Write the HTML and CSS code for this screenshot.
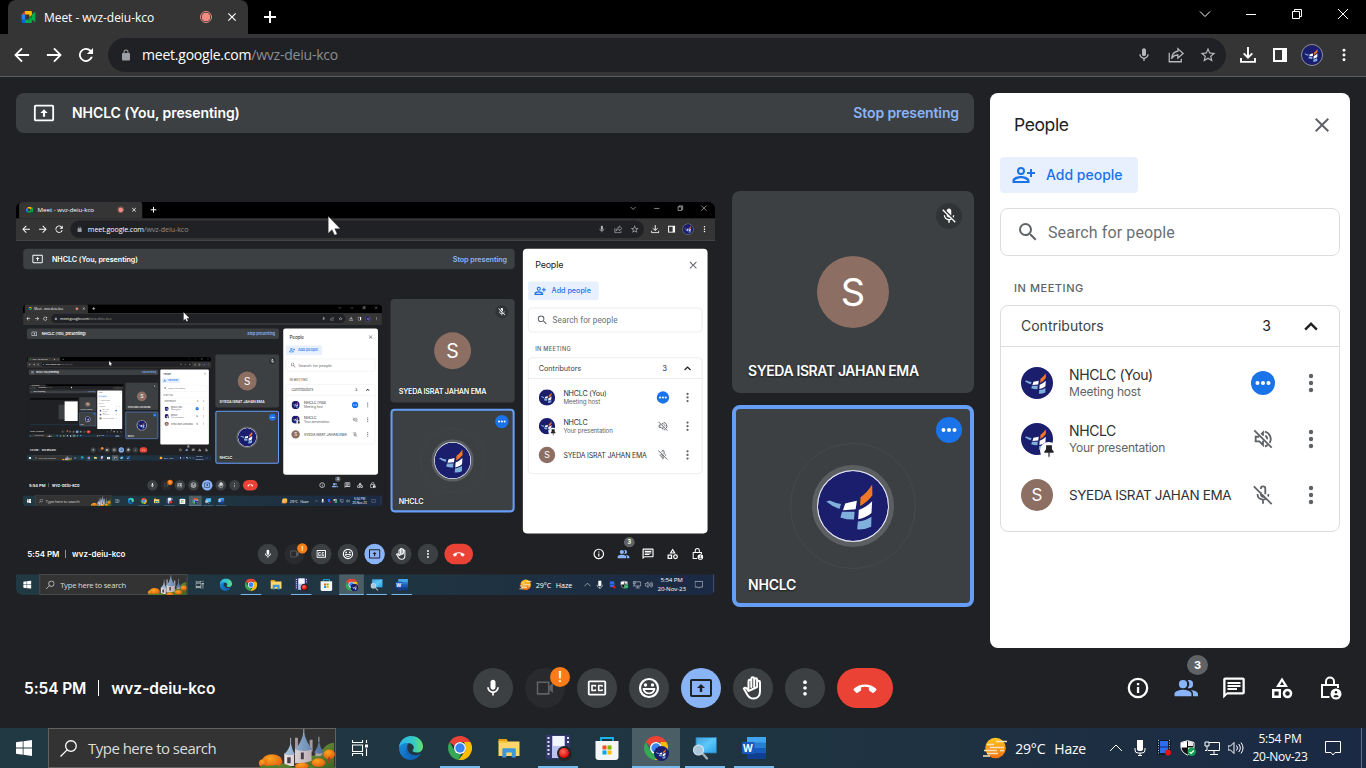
FILE: index.html
```html
<!DOCTYPE html>
<html lang="en">
<head>
<meta charset="utf-8">
<title>Meet - wvz-deiu-kco</title>
<link rel="stylesheet" href="styles.css">
</head>
<body>
<svg class="sprite" width="0" height="0" aria-hidden="true">
  <defs>
    <linearGradient id="sun" x1="0" y1="0" x2="0" y2="1"><stop offset="0" stop-color="#ffc91f"/><stop offset="1" stop-color="#f2700f"/></linearGradient>
    <linearGradient id="edge-a" x1="0" y1="0" x2="1" y2="0"><stop offset="0" stop-color="#2bb3ee"/><stop offset=".6" stop-color="#35c9c6"/><stop offset="1" stop-color="#67e06a"/></linearGradient>
    <linearGradient id="edge-b" x1="0" y1="0" x2="1" y2="1"><stop offset="0" stop-color="#1a93e0"/><stop offset="1" stop-color="#0c56a8"/></linearGradient>
    <linearGradient id="hill" x1="0" y1="0" x2="1" y2="1"><stop offset="0" stop-color="#7c9a3e"/><stop offset="1" stop-color="#3a6526"/></linearGradient>
    <linearGradient id="roof" x1="0" y1="0" x2="1" y2="0"><stop offset="0" stop-color="#a9c4e0"/><stop offset="1" stop-color="#4c6f9a"/></linearGradient>
    <linearGradient id="wall" x1="0" y1="0" x2="1" y2="0"><stop offset="0" stop-color="#efe6e6"/><stop offset="1" stop-color="#a79aa2"/></linearGradient>
    <radialGradient id="tree" cx=".4" cy=".3" r=".8"><stop offset="0" stop-color="#ffa51f"/><stop offset="1" stop-color="#d9540c"/></radialGradient>
    <linearGradient id="screen" x1="0" y1="0" x2="1" y2="1"><stop offset="0" stop-color="#3f9ed8"/><stop offset=".5" stop-color="#5cc8fa"/><stop offset="1" stop-color="#2a9fe6"/></linearGradient>
    <radialGradient id="rec" cx=".4" cy=".35" r=".7"><stop offset="0" stop-color="#ff6a5a"/><stop offset="1" stop-color="#d90000"/></radialGradient>
  </defs>
  <symbol id="i-logo" viewBox="0 0 72 72"><circle cx="36" cy="36" r="36" fill="#1b1d6d"/><path fill="#f07724" d="M55.7 14 56 25Q51 32 43.3 36L43.7 27Q51 22 55.7 14z"/><path fill="#fff" d="M28 33.3Q34 32 40 30.7L38.7 39.3 25.7 40.3zM42 40Q50 37 55.7 31L55 43.3Q50 48 41.3 49.7z"/><path fill="#7fb0db" d="M8.5 31.3 12 30.3Q18 33 23.7 34L22 39Q14 36 8.5 31.3zM24.7 42H37.7L37 50Q29 50 23 47.7zM41 52Q49 51 55 47L54.7 57.3Q48 60.5 40.3 60z"/></symbol>
  <symbol id="i-meet" viewBox="0 0 16 14"><path fill="#00832d" d="M9 7 11 9.3 13.5 11V3z"/><path fill="#0066da" d="M0 10v2.7C0 13.4.6 14 1.3 14H4l.6-2L4 10z"/><path fill="#e94235" d="M4 0 0 4l2 .6L4 4z"/><path fill="#2684fc" d="M0 4h4v6H0z"/><path fill="#00ac47" d="m15.100 1.500L12 4v6l3.100 2.500c.5.4 1 .1 1-.5V2c0-.6-.6-.9-1-.5zM9 7v3H4v4h6.700c.7 0 1.300-.6 1.300-1.300V10z"/><path fill="#ffba00" d="M10.700 0H4v4h5v3l3-2.500V1.300C12 .6 11.400 0 10.700 0z"/></symbol>
  <symbol id="i-back" viewBox="0 0 24 24"><path d="M21.500 10.700H6.300l6.600-6.600L11.200 2.400 1.600 12l9.600 9.600 1.700-1.700-6.600-6.600h15.200z"/></symbol>
  <symbol id="i-reload" viewBox="0 0 24 24"><path d="M18.700 5.300A9.400 9.400 0 1 0 21.100 14.400h-2.700A6.900 6.900 0 1 1 16.900 7.100L13.200 10.800H21.400V2.600z"/></symbol>
  <symbol id="i-lock" viewBox="0 0 24 24"><path d="M18 8h-1V6A5 5 0 0 0 7 6v2H6a2 2 0 0 0-2 2v11a2 2 0 0 0 2 2h12a2 2 0 0 0 2-2V10a2 2 0 0 0-2-2zM9 8V6a3 3 0 0 1 6 0v2z"/></symbol>
  <symbol id="i-mic" viewBox="0 0 24 24"><path d="M12 14c1.660 0 3-1.340 3-3V5c0-1.660-1.340-3-3-3S9 3.340 9 5v6c0 1.660 1.340 3 3 3zm5-3c0 2.760-2.240 5-5 5s-5-2.240-5-5H5c0 3.530 2.610 6.430 6 6.920V21h2v-3.080c3.390-.49 6-3.390 6-6.920z"/></symbol>
  <symbol id="i-micoff" viewBox="0 0 24 24"><path d="M19 11h-1.700c0 .74-.16 1.430-.43 2.050l1.230 1.230c.56-.98.9-2.090.9-3.280zm-4.020.17c0-.06.02-.11.02-.17V5c0-1.660-1.340-3-3-3S9 3.340 9 5v.18l5.980 5.990zM4.270 3 3 4.270l6.010 6.010V11c0 1.660 1.330 3 2.990 3 .22 0 .44-.03.65-.08l1.660 1.660c-.71.33-1.500.52-2.310.52-2.760 0-5.300-2.100-5.300-5.100H5c0 3.410 2.720 6.230 6 6.720V21h2v-3.280c.91-.13 1.770-.45 2.540-.9L19.730 21 21 19.730 4.270 3z"/></symbol>
  <symbol id="i-micoffline" viewBox="0 0 24 24"><g fill="none" stroke="currentColor" stroke-width="2"><path d="M2 2.500 21.500 22M9.700 9v2.500a2.500 2.500 0 0 0 3.500 2.200M9.700 5.500V5a2.400 2.400 0 0 1 4.800 0v6.200M6 11c0 3.500 2.700 6 6 6 1 0 2-.2 2.800-.6M18 11c0 1-.2 2-.6 2.700M12 17v4.500"/></g></symbol>
  <symbol id="i-voloff" viewBox="0 0 24 24"><g fill="none" stroke="currentColor" stroke-width="2"><path d="M2.500 2.500 21.500 21.500M7.800 9.500H4v5h4l4 4V14M10 7l2-2v3.500M14 4a8.200 8.200 0 0 1 5.200 12.300M17 18.500a8 8 0 0 1-3 1.600M14.500 8.300c1.500.8 2.200 2.300 1.900 4"/></g></symbol>
  <symbol id="i-share" viewBox="0 0 24 24"><path fill="none" stroke="currentColor" stroke-width="1.700" d="M3 9v12h16v-4M14.500 3.500 21.500 10l-7 6v-4C10.500 12 8 13.500 6 17 6.500 12 9 7.500 14.500 7z"/></symbol>
  <symbol id="i-star" viewBox="0 0 24 24"><path d="m22 9.240-7.190-.62L12 2 9.190 8.630 2 9.240l5.460 4.730L5.820 21 12 17.270 18.180 21l-1.630-7.030L22 9.240zM12 15.400l-3.760 2.270 1-4.280-3.320-2.880 4.380-.38L12 6.100l1.710 4.040 4.380.38-3.320 2.880 1 4.280L12 15.400z"/></symbol>
  <symbol id="i-download" viewBox="0 0 16 16"><path fill="none" stroke="currentColor" stroke-width="1.900" d="M8 0v10M3.700 6.300 8 10.600l4.300-4.300M1 11v3.900h14V11"/></symbol>
  <symbol id="i-dots" viewBox="0 0 24 24"><circle cx="12" cy="5" r="2.200"/><circle cx="12" cy="12" r="2.200"/><circle cx="12" cy="19" r="2.200"/></symbol>
  <symbol id="i-hdots" viewBox="0 0 24 24"><circle cx="6" cy="12" r="2.200"/><circle cx="12" cy="12" r="2.200"/><circle cx="18" cy="12" r="2.200"/></symbol>
  <symbol id="i-x" viewBox="0 0 24 24"><path d="M19 6.410 17.590 5 12 10.590 6.410 5 5 6.410 10.590 12 5 17.590 6.410 19 12 13.410 17.590 19 19 17.590 13.410 12z"/></symbol>
  <symbol id="i-present" viewBox="0 0 24 24"><path d="M21 3H3c-1.110 0-2 .89-2 2v14c0 1.110.89 2 2 2h18c1.110 0 2-.89 2-2V5c0-1.110-.89-2-2-2zm0 16.020H3V4.980h18v14.040zM10.800 16h2.400v-4H16l-4-4-4 4h2.800z"/></symbol>
  <symbol id="i-addperson" viewBox="0 0 24 24"><path d="M9 12a4 4 0 1 0 0-8 4 4 0 0 0 0 8zm0-6a2 2 0 1 1 0 4 2 2 0 0 1 0-4zm0 7c-2.700 0-8.500 1.300-8.500 4.500V20h17v-2.500C17.500 14.300 11.700 13 9 13zm-6.400 5c.3-1.200 3.700-2.800 6.400-2.800s6.100 1.600 6.400 2.800zM20 9V6h-2v3h-3v2h3v3h2v-3h3V9z"/></symbol>
  <symbol id="i-search" viewBox="0 0 24 24"><path d="M15.500 14h-.79l-.28-.27A6.470 6.470 0 0 0 16 9.500 6.500 6.500 0 1 0 9.500 16c1.610 0 3.090-.59 4.230-1.570l.27.28v.79l5 4.990L20.490 19l-4.990-5zm-6 0C7.010 14 5 11.990 5 9.500S7.010 5 9.500 5 14 7.010 14 9.500 11.990 14 9.500 14z"/></symbol>
  <symbol id="i-up" viewBox="0 0 24 24"><path d="m12 8-6.700 6.700 1.700 1.700 5-5 5 5 1.700-1.700z"/></symbol>
  <symbol id="i-pin" viewBox="0 0 24 24"><path d="M17 9V2H7v7l-3 4v2h7v6l1 2 1-2v-6h7v-2z"/></symbol>
  <symbol id="i-cam" viewBox="0 0 24 24"><path fill="none" stroke="currentColor" stroke-width="1.900" d="M3 5h13.500v14H3z"/><path d="m17 10 4.500-4v12L17 14z"/></symbol>
  <symbol id="i-cc" viewBox="0 0 24 24"><path d="M3 3a2 2 0 0 0-2 2v14a2 2 0 0 0 2 2h18a2 2 0 0 0 2-2V5a2 2 0 0 0-2-2zm.2 2.200h17.600v13.600H3.200zM6 8a1 1 0 0 0-1 1v6a1 1 0 0 0 1 1h4a1 1 0 0 0 1-1v-1.500H9v.5H7v-4h2v.5h2V9a1 1 0 0 0-1-1zm8 0a1 1 0 0 0-1 1v6a1 1 0 0 0 1 1h4a1 1 0 0 0 1-1v-1.500h-2v.5h-2v-4h2v.5h2V9a1 1 0 0 0-1-1z"/></symbol>
  <symbol id="i-smile" viewBox="0 0 24 24"><circle cx="12" cy="12" r="9" fill="none" stroke="currentColor" stroke-width="2.200"/><circle cx="8.500" cy="9" r="1.700"/><circle cx="15.500" cy="9" r="1.700"/><path fill="none" stroke="currentColor" stroke-width="1.800" stroke-linejoin="round" d="M6.500 13h11c-.6 2.600-2.800 4.300-5.500 4.300S7.100 15.600 6.500 13z"/></symbol>
  <symbol id="i-hand" viewBox="0 0 24 24"><path fill="none" stroke="currentColor" stroke-width="2" stroke-linejoin="round" stroke-linecap="round" d="M7.500 12.500V5.200a1.400 1.400 0 0 1 2.800 0V11M10.300 11V2.700a1.400 1.400 0 0 1 2.900 0V11M13.200 11V3.700a1.400 1.400 0 0 1 2.900 0V11M16.100 11V6.200a1.400 1.400 0 0 1 2.900 0v9.300c0 4-2.600 7-6.500 7-3 0-4.700-1.300-6-3.600L2.800 12.500c.9-1.300 2.300-1 3.100.1l1.600 2.400z"/></symbol>
  <symbol id="i-hang" viewBox="0 0 24 24"><path d="M12 8.500C7.800 8.500 3.700 10 .8 12.800a1 1 0 0 0 0 1.400l2.500 2.500a1 1 0 0 0 1.300.1l3-2c.3-.2.500-.5.500-.9v-2.600a13 13 0 0 1 7.800 0v2.600c0 .4.200.7.500.9l3 2a1 1 0 0 0 1.300-.1l2.500-2.500a1 1 0 0 0 0-1.400C20.300 10 16.200 8.500 12 8.500z"/></symbol>
  <symbol id="i-info" viewBox="0 0 24 24"><circle cx="12" cy="12" r="9.200" fill="none" stroke="currentColor" stroke-width="2.300"/><path d="M10.900 7h2.300v2.200h-2.300zM10.900 11h2.300v6h-2.300z"/></symbol>
  <symbol id="i-people" viewBox="0 0 24 24"><path d="M9 12.300a4 4 0 1 0 0-8.200 4 4 0 0 0 0 8.200zm0 1.500c-2.700 0-8.500 1-8.500 4.200v2.200h17V18c0-3.200-5.800-4.200-8.500-4.200zM15 12.300a4.100 4.100 0 0 0 0-8.200c-.5 0-.9.100-1.300.2a6 6 0 0 1 0 7.800c.4.100.8.200 1.300.2zM16.700 13.900c1.500 1 2.300 2.300 2.300 4.100v2.200h5V18c0-2.400-3.700-3.700-7.300-4.100z"/></symbol>
  <symbol id="i-chat" viewBox="0 0 24 24"><path d="M3.500 3.700h17v12.600H5.200l-1.700 1.500zm-.3-2.200c-1.100 0-2 .9-2 2v19l4-4h15.600c1.100 0 2-.9 2-2v-13c0-1.100-.9-2-2-2zM5.500 12h9.500v2H5.500zm0-3h13v2h-13zm0-3h13v2h-13z"/></symbol>
  <symbol id="i-shapes" viewBox="0 0 24 24"><path d="M12 1.500 6 11h12zm0 4L14 9h-4zM2 13v9h9v-9zM8.600 19.600H4.400v-4.200h4.200zM17.500 12.700a4.800 4.800 0 1 0 0 9.600 4.800 4.800 0 0 0 0-9.600zm0 7.100a2.300 2.300 0 1 1 0-4.600 2.300 2.300 0 0 1 0 4.600z"/></symbol>
  <symbol id="i-host" viewBox="0 0 24 24"><path fill="none" stroke="currentColor" stroke-width="2" d="M11.500 21H4V9h16v3M8 9V5.500a4 4 0 0 1 8 0V9"/><circle cx="18" cy="18" r="5.500"/><circle cx="18" cy="16.200" r="1.300" fill="#202124"/><path fill="#202124" d="M15.300 20.300q2.700-2.600 5.400 0l-1 .9h-3.400z"/></symbol>
  <symbol id="i-chrome" viewBox="0 0 24 24"><path fill="#ea4335" d="M12 0c4.500 0 8.300 2.400 10.400 6H12a6 6 0 0 0-5.600 4L1.600 6A12 12 0 0 1 12 0z"/><path fill="#34a853" d="M1.600 6 6.800 15a6 6 0 0 0 6.400 2.900L10.500 23.900A12 12 0 0 1 1.600 6z"/><path fill="#fbbc05" d="M22.400 6a12 12 0 0 1-11.900 17.900L17.200 15A6 6 0 0 0 17 8.700L16 6z"/><circle cx="12" cy="12" r="6" fill="#fff"/><circle cx="12" cy="12" r="4.700" fill="#3b83f1"/></symbol>
  <symbol id="i-edge" viewBox="0 0 24 24"><path fill="url(#edge-b)" d="M.3 10C2 4 9 3 13 6c-4 1-5 3-5 6 0 5 5 8.500 10 7.200 1.300-.3 2.500-.9 3.600-1.600C19 22 16 24 12 24 4 24-1 17 .3 10z"/><path fill="url(#edge-a)" d="M.1 11C.6 5 5.500 0 12 0c7 0 12 5 12 10.500 0 4-3 6-6 6-2.500 0-4.500-1-4.500-2 0-.7 1.300-1.200 1.300-3.100C14.800 9 12 7 8.500 7 4.500 7 1.500 8.500.1 11z"/><path fill="#1267b8" d="M8.500 10c-1 6 4 11 10 9.200 1.200-.3 2.200-.9 3-1.500-2.500 4-9 5.500-12.500 2C6 17 6 13 8.500 10z"/></symbol>
  <symbol id="i-folder" viewBox="0 0 24 24"><path fill="#e5a50a" d="M1.500 3h8l1.800 2.500H1.500z"/><path fill="#ffd667" d="M1.500 5.500h21V20h-21z"/><path fill="#f5c041" d="M1.500 5h8.300v1.800H1.500z"/><path fill="#3c97dd" d="M5.300 13.200Q5.300 12.200 6.300 12.200h11.500q1 0 1 1v8.300h-4v-5h-5.500v5h-4z"/></symbol>
  <symbol id="i-rec" viewBox="0 0 26 26"><path fill="#34386e" d="M0 0h24v24H0z"/><path fill="#bac4ef" d="M6 1h13v22H6z"/><path fill="#f3f5ff" d="M7 1h11v10H7z"/><path fill="#dfe4f8" d="M1.500 2h2v2h-2zm0 4h2v2h-2zm0 4h2v2h-2zm0 4h2v2h-2zm0 4h2v2h-2zM21 2h2v2h-2zm0 4h2v2h-2z"/><circle cx="18.500" cy="18.500" r="7.500" fill="#252525"/><circle cx="18" cy="18" r="5" fill="url(#rec)"/></symbol>
  <symbol id="i-store" viewBox="0 0 24 24"><path fill="none" stroke="#19b4ea" stroke-width="1.800" d="M6 6V2h12v4"/><path fill="#f3f5f6" d="M.5 5h23v16q0 3-3 3h-17q-3 0-3-3z"/><path fill="#f25022" d="M7.500 9.500h4v4h-4z"/><path fill="#7fba00" d="M12.500 9.500h4v4h-4z"/><path fill="#00a4ef" d="M7.500 14.500h4v4h-4z"/><path fill="#ffb900" d="M12.500 14.500h4v4h-4z"/></symbol>
  <symbol id="i-remote" viewBox="0 0 24 24"><path fill="url(#screen)" stroke="#2b78a8" stroke-width=".8" d="M3 1.500h20.500V17H3z"/><path stroke="#a9b0b8" stroke-width="2.300" stroke-linecap="round" d="m10 18 4 4.500"/><circle cx="5.500" cy="14" r="5" fill="#a9c6dc" stroke="#dce6ee" stroke-width="1.100"/></symbol>
  <symbol id="i-word" viewBox="0 0 24 24"><path fill="#41a5ee" d="M5 1h19v6H5z"/><path fill="#2b7cd3" d="M5 6.500h19V12H5z"/><path fill="#185abd" d="M5 12h19v5.500H5z"/><path fill="#103f91" d="M5 17.500h19V23H5z"/><rect y="6" width="12.500" height="12" rx="1" fill="#185abd"/></symbol>
  <symbol id="i-castle" viewBox="0 0 78 40"><path fill="#a79a9f" d="M38 9h3v12h-3zM53 11h3v12h-3z"/><path fill="url(#hill)" d="M40 40Q48 29 58 27 66 22 70 17 74 14 78 14V40z"/><path fill="url(#wall)" d="M27 25h10v13H27zM38 20h17v15H38zM59 23h7v5h-7z"/><path fill="url(#roof)" d="M47 3 Q50 15 56 21q-9 3-18 0Q44 15 47 3zM33.500 12q1 9 4.500 14-6 2-11 0Q33 20 33.500 12zM62.500 10q1 10 5 14-5 2-10 0Q62 19 62.500 10z"/><path stroke="#b9cbe0" d="M47 0v6M33.500 9v5M62.500 8v5" stroke-width=".8"/><path fill="#473d4b" d="M30 29h3.500v6H30zM44 24h3v7h-3z"/><path fill="url(#hill)" d="M36 40Q42 35 50 34 60 32 65 27 72 22 78 21V40zM18 40q4-7 10-4l10 4z"/><g fill="url(#tree)"><ellipse cx="14.500" cy="33" rx="10.500" ry="7"/><ellipse cx="5" cy="35" rx="4" ry="4"/><ellipse cx="73" cy="26" rx="6" ry="5"/><ellipse cx="62" cy="34.500" rx="7" ry="4.500"/><ellipse cx="45" cy="38" rx="7" ry="3.500"/></g><path fill="#b03a17" d="M72 29h2v6h-2z"/><path fill="#557f2e" d="M2 40q3-6 6-2l12-1 6 3zM52 40q2-5 6 0z"/></symbol>
  <symbol id="i-cursor" viewBox="0 0 12 19"><path fill="#fff" stroke="#333" stroke-width=".4" d="M.3.300V17l3.700-3.600L6.500 18.800 9 17.600 6.700 12.500H12z"/></symbol>
</svg>

<div class="desktop" id="desktop">
  <div class="tabstrip">
    <div class="tab">
      <svg class="favicon"><use href="#i-meet"/></svg>
      <span class="tab-title">Meet - wvz-deiu-kco</span>
      <span class="rec-dot"></span>
      <svg class="tab-close"><use href="#i-x"/></svg>
    </div>
    <svg class="new-tab" viewBox="0 0 12 12"><path d="M6 0v12M0 6h12"/></svg>
    <div class="win-controls">
      <svg viewBox="0 0 10 10"><path d="M0 2.500 5 7.500 10 2.500"/></svg>
      <svg viewBox="0 0 10 10"><path d="M0 5.500h10"/></svg>
      <svg viewBox="0 0 10 10"><path d="M.5 2.500h7v7h-7zM2.500 2.500V.5h7v7h-2"/></svg>
      <svg viewBox="0 0 10 10"><path d="M0 0 10 10M10 0 0 10"/></svg>
    </div>
  </div>

  <div class="toolbar">
    <div class="nav">
      <svg><use href="#i-back"/></svg>
      <svg class="flip"><use href="#i-back"/></svg>
      <svg><use href="#i-reload"/></svg>
    </div>
    <div class="omnibox">
      <svg class="lock"><use href="#i-lock"/></svg>
      <span class="url"><b>meet.google.com</b>/wvz-deiu-kco</span>
      <div class="omni-icons">
        <svg><use href="#i-mic"/></svg>
        <svg><use href="#i-share"/></svg>
        <svg><use href="#i-star"/></svg>
      </div>
    </div>
    <div class="ext">
      <svg><use href="#i-download"/></svg>
      <svg class="sidepanel" viewBox="0 0 14 14"><path d="M0 0h14v14H0zM2 2v10h7V2z" fill-rule="evenodd"/></svg>
      <svg class="profile"><use href="#i-logo"/></svg>
      <svg><use href="#i-dots"/></svg>
    </div>
  </div>

  <main class="meet">
    <div class="upper">
      <div class="call">
        <div class="banner">
          <svg><use href="#i-present"/></svg>
          <span class="banner-name">NHCLC (You, presenting)</span>
          <span class="stop">Stop presenting</span>
        </div>
        <div class="stage">
          <div class="share"></div>
          <div class="tiles">
            <div class="tile">
              <span class="tile-state muted"><svg><use href="#i-micoff"/></svg></span>
              <span class="letter big">S</span>
              <span class="tile-name t-ema">SYEDA ISRAT JAHAN EMA</span>
            </div>
            <div class="tile active">
              <span class="tile-state talking"><svg><use href="#i-hdots"/></svg></span>
              <span class="halo"><svg><use href="#i-logo"/></svg></span>
              <span class="tile-name t-nh">NHCLC</span>
            </div>
          </div>
        </div>
      </div>

      <aside class="panel">
        <div class="panel-head"><span>People</span><svg><use href="#i-x"/></svg></div>
        <div class="add"><svg><use href="#i-addperson"/></svg><span>Add people</span></div>
        <div class="find"><svg><use href="#i-search"/></svg><span>Search for people</span></div>
        <div class="section">IN MEETING</div>
        <div class="list">
          <div class="list-head"><span>Contributors</span><span class="count">3</span><svg><use href="#i-up"/></svg></div>
          <div class="rows">
            <div class="row">
              <span class="avatar"><svg><use href="#i-logo"/></svg></span>
              <div class="who"><span class="w-you">NHCLC (You)</span><small class="w-host">Meeting host</small></div>
              <span class="status talking"><svg><use href="#i-hdots"/></svg></span>
              <svg class="more"><use href="#i-dots"/></svg>
            </div>
            <div class="row">
              <span class="avatar"><svg><use href="#i-logo"/></svg><i class="pin"><svg><use href="#i-pin"/></svg></i></span>
              <div class="who"><span class="w-nh">NHCLC</span><small class="w-pres">Your presentation</small></div>
              <span class="status"><svg><use href="#i-voloff"/></svg></span>
              <svg class="more"><use href="#i-dots"/></svg>
            </div>
            <div class="row">
              <span class="avatar letter">S</span>
              <div class="who solo"><span class="w-ema">SYEDA ISRAT JAHAN EMA</span></div>
              <span class="status"><svg><use href="#i-micoffline"/></svg></span>
              <svg class="more"><use href="#i-dots"/></svg>
            </div>
          </div>
        </div>
      </aside>
    </div>

    <div class="controls">
      <div class="meta"><span class="m-time">5:54 PM</span><i></i><span class="m-code">wvz-deiu-kco</span></div>
      <div class="buttons">
        <span class="btn"><svg><use href="#i-mic"/></svg></span>
        <span class="btn off"><svg><use href="#i-cam"/></svg><b class="warn">!</b></span>
        <span class="btn"><svg><use href="#i-cc"/></svg></span>
        <span class="btn"><svg class="lg"><use href="#i-smile"/></svg></span>
        <span class="btn on"><svg class="lg"><use href="#i-present"/></svg></span>
        <span class="btn"><svg class="lg"><use href="#i-hand"/></svg></span>
        <span class="btn"><svg><use href="#i-dots"/></svg></span>
        <span class="btn hang"><svg class="lg"><use href="#i-hang"/></svg></span>
      </div>
      <div class="side">
        <span><svg><use href="#i-info"/></svg></span>
        <span class="sel"><svg><use href="#i-people"/></svg><b class="badge">3</b></span>
        <span><svg><use href="#i-chat"/></svg></span>
        <span><svg><use href="#i-shapes"/></svg></span>
        <span><svg><use href="#i-host"/></svg></span>
      </div>
    </div>
  </main>

  <footer class="taskbar">
    <span class="start"><svg viewBox="0 0 16 16"><path d="M0 2.300 6.700 1.300V7.600H0zM7.500 1.200 16 0v7.600H7.500zM0 8.400h6.700v6.300L0 13.700zM7.500 8.400H16V16l-8.500-1.200z"/></svg></span>
    <div class="search">
      <svg class="lens" viewBox="0 0 16 16"><circle cx="10.300" cy="5.700" r="5"/><path d="M6.700 9.300.500 15.500"/></svg>
      <span>Type here to search</span>
      <svg class="castle"><use href="#i-castle"/></svg>
    </div>
    <div class="apps">
      <span><svg class="taskview" viewBox="0 0 16 16"><path d="M.5 0v2.500h10V0M.5 5h10v6.500H.5zM.5 16v-2.500h10V16M14.500 0v3M14.500 8.500V16"/><path class="solid" d="M13 4.500h3v3h-3z"/></svg></span>
      <span><svg><use href="#i-edge"/></svg></span>
      <span class="run"><svg><use href="#i-chrome"/></svg></span>
      <span><svg><use href="#i-folder"/></svg></span>
      <span class="run"><svg class="wide"><use href="#i-rec"/></svg></span>
      <span><svg><use href="#i-store"/></svg></span>
      <span class="run current"><svg><use href="#i-chrome"/></svg><svg class="mini"><use href="#i-logo"/></svg></span>
      <span class="run"><svg><use href="#i-remote"/></svg></span>
      <span class="run word"><svg><use href="#i-word"/></svg><b>W</b></span>
    </div>
    <div class="weather">
      <svg viewBox="0 0 24 22"><circle cx="12.500" cy="11" r="10.300" fill="url(#sun)"/><path stroke="#f6e3bd" stroke-width="1.700" d="M13 4.500h11M4 7.500h7M7 10.500h14M1 13.500h13M4 16.500h11M17 13.500h4M0 19h7" /></svg>
      <span class="w-temp">29°C</span><span class="w-cond">Haze</span>
    </div>
    <div class="tray">
      <svg class="line" viewBox="0 0 16 16"><path d="M2 11 8 5l6 6"/></svg>
      <svg viewBox="0 0 16 16"><path fill="#fff" d="M5 0h6v9q0 2-3 2T5 9zM7.500 13h1v2h-1zM6 15h4v1H6z"/><path fill="none" stroke="#fff" d="M3 8v2q0 3 3 3h4q3 0 3-3V8"/></svg>
      <svg viewBox="0 0 16 16"><path fill="#15192b" d="M1 0h14v15H1z"/><path fill="#2e6cf0" d="M4 1h8v12H4z"/><path fill="#102a7c" d="M4 6.500h8v1H4z"/><path stroke="#9edfd8" stroke-dasharray="1 1.500" d="M2.500 0v15M13.500 0v15"/><circle cx="12" cy="12.500" r="3" fill="#e31414"/></svg>
      <svg viewBox="0 0 16 16"><path fill="#111" stroke="#fff" d="M7.500.7 14 2.500V7q0 5-6.500 8Q1 12 1 7V2.500z"/><path fill="#fff" d="M7 1v6.500H1V3zM8 7.500h6Q14 12 8 14.500z"/><path fill="#fff" d="M8 1l5 1.500V6H8z" opacity=".9"/><circle cx="11.700" cy="11.800" r="4.200" fill="#12a150"/><path fill="none" stroke="#fff" stroke-width="1.200" d="m9.600 11.800 1.500 1.500 2.700-2.800"/></svg>
      <svg class="line" viewBox="0 0 16 16"><path d="M5 2.500h10.500v8H4M1 2h4v4H1zM3 6v4.500H1M10 11v3M6 14.500h8"/></svg>
      <svg class="line" viewBox="0 0 16 16"><path d="M0 6h2.500L6 2.500v11L2.500 10H0zM8.500 5.500q2 2.500 0 5M10.700 4q3.200 4 0 8M13 2.500q4 5.500 0 11"/></svg>
    </div>
    <div class="clock"><span class="c-time">5:54 PM</span><span class="c-date">20-Nov-23</span></div>
    <svg class="notify" viewBox="0 0 16 16"><path d="M.5 1.500h15v11H10L8 15l-2-2.500H.5z"/></svg>
    <i class="peek"></i>
  </footer>
</div>
<script src="script.js"></script>
</body>
</html>
```
FILE: styles.css
```css
* { box-sizing: border-box; }
body { margin: 0; width: 1366px; height: 768px; overflow: hidden; background: #202124; }
svg { display: block; flex: none; fill: currentColor; }
.sprite { position: absolute; }

.desktop {
  width: 1366px; height: 768px; display: flex; flex-direction: column;
  background: #202124; color: #fff; overflow: hidden; white-space: nowrap;
  font-family: Inter, Roboto, "Liberation Sans", sans-serif;
}

/* browser chrome */
.tabstrip { height: 34px; background: #000; display: flex; padding-left: 8px; font-family: "Open Sans", "Noto Sans", sans-serif; }
.tab { width: 240px; height: 34px; background: #353535; border-radius: 8px 8px 0 0; display: flex; align-items: center; padding: 0 9px 0 13px; }
.favicon { width: 15px; height: 12px; }
.tab-title { font-size: 12px; letter-spacing: -0.05px; margin-left: 8px; }
.rec-dot { width: 12px; height: 12px; border-radius: 50%; border: 1px solid #f28b82; background: radial-gradient(circle, #f28b82 4px, transparent 4.600px); margin-left: auto; }
.tab-close { width: 14px; height: 14px; margin-left: 13px; }
.new-tab { width: 12px; height: 12px; margin: 11px 0 0 16px; stroke: #fff; stroke-width: 2; }
.win-controls { margin-left: auto; display: flex; gap: 36px; padding: 9px 18px 0 0; }
.win-controls svg { width: 10px; height: 10px; stroke: #fff; fill: none; overflow: visible; }

.toolbar { height: 43px; background: #353535; border-bottom: 1px solid #5c5d5f; display: flex; padding: 4px 12px 4px 12px; }
.nav { display: flex; gap: 14px; align-items: center; padding-left: 1px; width: 96px; }
.nav svg { width: 18px; height: 18px; }
.flip { transform: scaleX(-1); }
.omnibox { width: 1118px; height: 34px; border-radius: 17px; background: #202124; display: flex; align-items: center; padding: 0 9px 1px 12px; font: 14px "Open Sans", "Noto Sans", sans-serif; color: #8b8e92; }
.lock { width: 12px; height: 12px; color: #9aa0a6; }
.url { margin-left: 10px; letter-spacing: -0.22px; }
.url b { font-weight: 400; color: #fff; }
.omni-icons { margin-left: auto; display: flex; gap: 14px; color: #b5b7ba; }
.omni-icons svg { width: 18px; height: 18px; }
.omni-icons svg:first-child { width: 16px; height: 16px; margin: 1px; }
.ext { display: flex; align-items: center; margin-left: 14px; gap: 13px; }
.ext svg { width: 16px; height: 16px; }
.ext .sidepanel { width: 14px; height: 14px; margin: 0 1px 0 4px; }
.ext .profile { width: 22px; height: 22px; border-radius: 50%; border: 1px solid #8d8fae; }

/* meeting */
.meet { height: 651px; padding: 16px 16px 0; display: flex; flex-direction: column; }
.upper { height: 555px; display: flex; gap: 16px; }
.call { width: 958px; display: flex; flex-direction: column; }
.banner { height: 40px; border-radius: 8px; background: #3c4043; display: flex; align-items: center; padding: 0 15px 1px 16px; font-size: 14px; font-weight: 600; }
.banner svg { width: 24px; height: 22px; margin-top: 1px; }
.banner-name { margin-left: 16px; letter-spacing: -0.07px; }
.stop { margin-left: auto; color: #8ab4f8; letter-spacing: -0.12px; }
.stage { height: 515px; display: flex; align-items: center; gap: 17px; padding-top: 16px; }
.share {
  width: 699px; height: 393px; border-radius: 7px; overflow: hidden; position: relative; margin-top: -1px;
  background:
    linear-gradient(#fff, #fff) 98.500% 43% / 27% 72% no-repeat,
    linear-gradient(#3c4043, #3c4043) 73% 53% / 18% 54% no-repeat,
    linear-gradient(#000, #000) 0 0 / 100% 5% no-repeat,
    linear-gradient(#20303f, #20303f) 0 100% / 100% 5% no-repeat,
    #202124;
}
.share > .desktop { position: absolute; left: -1px; top: -1px; transform: scale(.513); transform-origin: 0 0; }
.cursor { position: absolute; left: 610px; top: 29px; width: 24px; height: 38px; }
.tiles { display: flex; flex-direction: column; gap: 12px; }
.tile { width: 242px; height: 202px; border-radius: 8px; background: #3c4043; display: grid; place-items: center; position: relative; }
.tile.active { border: 4px solid #669df6; }
.tile-state { position: absolute; right: 12px; top: 12px; width: 26px; height: 26px; border-radius: 50%; display: grid; place-items: center; background: #313437; }
.tile-state svg { width: 18px; height: 18px; }
.active .tile-state { right: 8px; top: 8px; }
.tile-state.talking { background: #1a73e8; }
.tile-state.talking svg { width: 22px; height: 22px; }
.letter { background: #8d6e63; color: #fff; border-radius: 50%; display: grid; place-items: center; font-family: Inter, Roboto, sans-serif; }
.letter.big { width: 72px; height: 72px; font-size: 38px; }
.tile-name { position: absolute; left: 16px; bottom: 13px; font-size: 14px; font-weight: 600; line-height: 18px; text-shadow: 0 1px 2px rgba(0,0,0,.6); }
.active .tile-name { left: 12px; bottom: 9px; }
.t-ema { letter-spacing: -0.4px; }
.t-nh { letter-spacing: -0.2px; }
.halo { width: 126px; height: 126px; border-radius: 50%; border: 1px solid #45494c; display: grid; place-items: center; }
.halo svg { width: 82px; height: 82px; border: 5px solid #5b5f62; border-radius: 50%; background: #dfe1ee; padding: 1px; }

/* people panel */
.panel { width: 360px; height: 555px; background: #fff; border-radius: 8px; color: #202124; padding: 0 10px; }
.panel-head { height: 64px; display: flex; align-items: center; justify-content: space-between; padding: 0 6px 0 14px; font-size: 17.500px; letter-spacing: -0.4px; }
.panel-head span { margin-top: -2px; }
.panel-head svg { width: 24px; height: 24px; color: #5f6368; }
.add { width: 138px; height: 36px; border-radius: 4px; background: #e8f0fe; color: #1a73e8; display: flex; align-items: center; padding: 0 12px; gap: 10px; font-size: 14px; font-weight: 500; }
.add span { margin-top: -1px; }
.add svg { width: 24px; height: 24px; }
.find { height: 48px; margin-top: 15px; border: 1px solid #dadce0; border-radius: 8px; display: flex; align-items: center; padding-left: 15px; gap: 8px; font: 16px Roboto, sans-serif; letter-spacing: .1px; color: #6b6f74; }
.find svg { width: 24px; height: 24px; color: #5f6368; }
.section { height: 49px; padding: 24px 0 0 14px; font-size: 11px; line-height: 16px; font-weight: 500; letter-spacing: .55px; color: #5f6368; }
.list { height: 227px; border: 1px solid #dadce0; border-radius: 8px; }
.list-head { height: 41px; border-bottom: 1px solid #dadce0; display: flex; align-items: center; padding: 0 16px 0 20px; font-size: 14px; color: #3c4043; }
.list-head span { margin-top: -2px; }
.list-head .count { margin-left: auto; margin-right: 28px; color: #202124; }
.list-head svg { width: 24px; height: 24px; color: #202124; }
.rows { padding-top: 8px; }
.row { height: 56px; display: flex; align-items: center; padding: 0 16px 0 20px; }
.avatar { width: 32px; height: 32px; font-size: 17px; position: relative; flex: none; }
.avatar > svg { width: 32px; height: 32px; }
.pin { position: absolute; left: 19px; top: 19px; width: 17px; height: 17px; border-radius: 50%; background: #fff; display: grid; place-items: center; color: #202124; }
.pin svg { width: 14px; height: 14px; }
.who { margin: -2px 0 0 16px; display: flex; flex-direction: column; font-size: 14px; line-height: 18px; color: #303134; }
.who.solo { margin-top: 0; }
.who small { font-size: 12px; line-height: 15px; color: #5f6368; }
.w-you, .w-nh { letter-spacing: -0.4px; }
.w-ema { font-size: 13.500px; letter-spacing: -0.35px; }
.w-pres { letter-spacing: -0.25px; }
.w-host { letter-spacing: -0.2px; }
.status { margin-left: auto; width: 24px; height: 24px; border-radius: 50%; display: grid; place-items: center; color: #5f6368; }
.status svg { width: 22px; height: 22px; }
.status.talking { background: #1a73e8; color: #fff; }
.more { width: 24px; height: 24px; margin-left: 24px; color: #5f6368; }

/* bottom controls */
.controls { height: 80px; display: grid; grid-template-columns: 457px 1fr 224px; align-items: center; }
.meta { display: flex; align-items: center; font-size: 15.500px; font-weight: 600; padding-left: 8px; }
.meta i { width: 1px; height: 16px; background: #fff; margin: 0 12px; }
.m-time { letter-spacing: -0.1px; }
.buttons { display: flex; gap: 12px; }
.btn { width: 40px; height: 40px; border-radius: 50%; background: #3c4043; display: grid; place-items: center; position: relative; }
.btn svg { width: 20px; height: 20px; }
.btn svg.lg { width: 24px; height: 24px; }
.btn.off { background: #292a2d; color: #5f6164; }
.btn.on { background: #8ab4f8; color: #202124; }
.btn.hang { width: 56px; border-radius: 20px; background: #ea4335; }
.warn { position: absolute; left: 25px; top: -1px; width: 20px; height: 20px; border-radius: 50%; background: #fa7b17; color: #fff; font: 500 15px/20px Roboto, sans-serif; text-align: center; }
.side { display: flex; justify-content: space-between; padding-right: 8px; }
.side span { position: relative; }
.side svg { width: 24px; height: 24px; }
.side .sel { color: #8ab4f8; }
.badge { position: absolute; left: 13px; top: -21px; width: 21px; height: 20px; border-radius: 50%; background: #5f6368; color: #fff; font-size: 11px; line-height: 20px; text-align: center; }

/* taskbar */
.taskbar { height: 40px; display: flex; align-items: center; background: linear-gradient(90deg, #203943, #1f3441 60%, #1b2944); font-family: "Open Sans", "Noto Sans", sans-serif; }
.start { width: 48px; display: grid; place-items: center; }
.start svg { width: 16px; height: 16px; }
.search { width: 288px; height: 40px; background: #333; border: 1px solid #62625f; display: flex; align-items: center; padding-left: 11px; font-size: 15px; color: #dcdcdc; }
.lens { width: 17px; height: 17px; fill: none; stroke: #fff; stroke-width: 1.200; }
.search span { margin-left: 11px; letter-spacing: -0.52px; }
.castle { width: 78px; height: 39px; margin-left: auto; }
.apps { display: flex; }
.apps span { width: 49px; height: 40px; display: grid; place-items: center; position: relative; }
.apps span:first-child { width: 50px; }
.apps svg { width: 24px; height: 24px; }
.apps .wide { width: 26px; height: 26px; margin-left: 2px; }
.apps .taskview { width: 16px; height: 16px; fill: none; stroke: #fff; stroke-width: 1.100; margin-right: 2px; }
.taskview .solid { fill: #fff; stroke: none; }
.run::after { content: ""; position: absolute; left: 5px; right: 4px; bottom: 0; height: 2px; background: #76b9ed; }
.current { background: linear-gradient(#4a5e66, #4a5e66) 1px 0 / 48px 40px no-repeat; }
.current::after { left: 1px; right: 0; }
.apps .mini { position: absolute; left: 23px; top: 18px; width: 15px; height: 15px; }
.word b { position: absolute; left: 14px; top: 13px; font: 700 10px/14px "Open Sans", sans-serif; }
.weather { margin-left: auto; display: flex; align-items: center; font-size: 14px; letter-spacing: -0.2px; }
.weather svg { width: 24px; height: 22px; margin-right: 8px; }
.w-cond { margin-left: 9px; }
.tray { display: flex; gap: 8px; margin-left: 22px; }
.tray svg { width: 16px; height: 16px; }
.tray .line { fill: none; stroke: #fff; }
.clock { width: 72px; display: flex; flex-direction: column; align-items: center; font-size: 12px; line-height: 18px; letter-spacing: -0.25px; }
.notify { width: 16px; height: 16px; margin-left: 9px; fill: none; stroke: #fff; }
.peek { width: 1px; height: 40px; background: #65708a; margin: 0 4px 0 20px; }
```
FILE: script.js
```js
// The shared screen shows the desktop it is running on, several levels deep.
const LEVELS = 4;
const blank = document.getElementById('desktop').cloneNode(true);
blank.removeAttribute('id');

let host = document.querySelector('.share');
for (let level = 0; level < LEVELS; level++) {
  const copy = blank.cloneNode(true);
  copy.insertAdjacentHTML('beforeend', '<svg class="cursor"><use href="#i-cursor"/></svg>');
  host.appendChild(copy);
  host = copy.querySelector('.share');
}
```
